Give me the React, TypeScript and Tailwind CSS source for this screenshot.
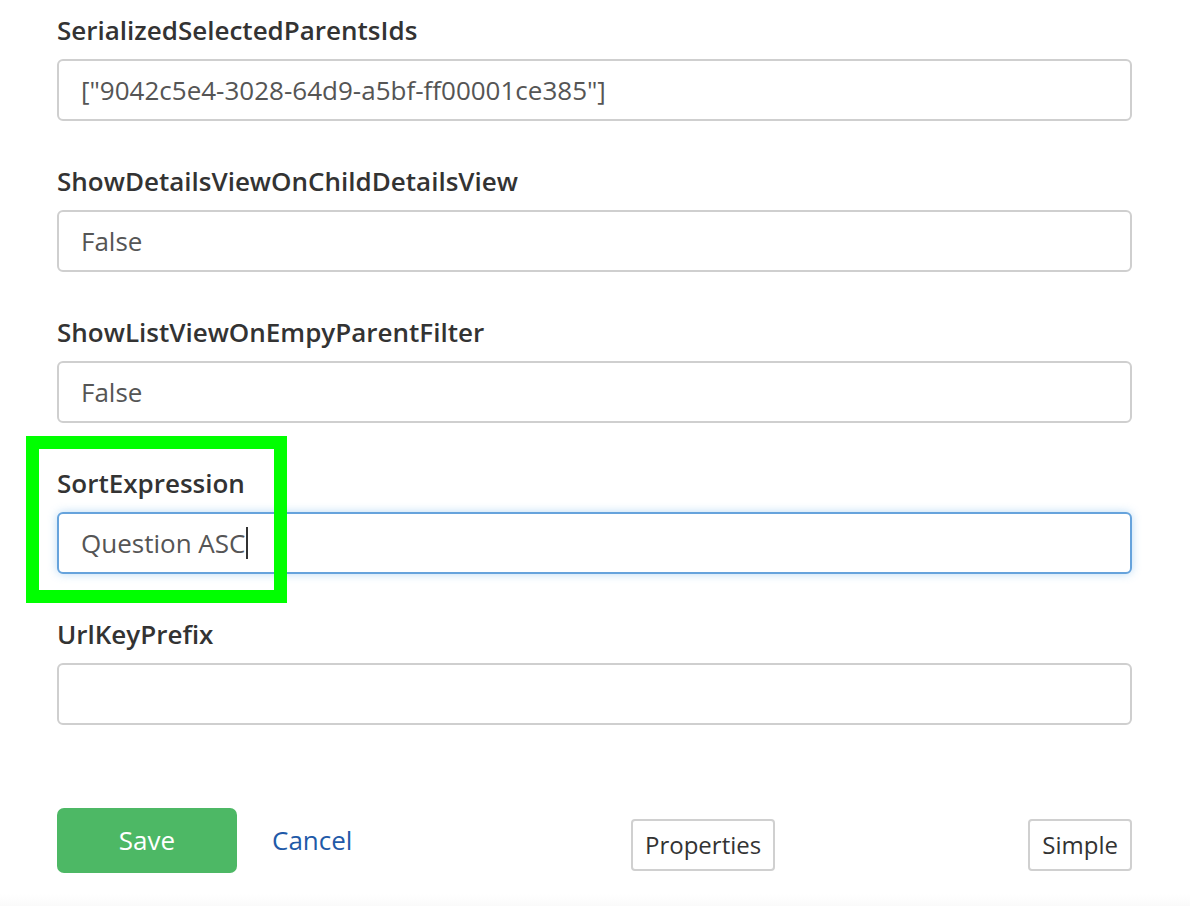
import React from "react";

const font = { fontFamily: '"Open Sans", "Noto Sans", sans-serif' };

function Field({ label, value, focused }: { label: string; value: string; focused?: boolean }) {
  return (
    <div className="mb-[44px]">
      <div className="h-[32px] leading-[32px] text-[26px] font-semibold text-[#333] mb-[13px]">{label}</div>
      <div
        className={
          focused
            ? "h-[62px] rounded-[6px] border-2 border-[#66a3dc] bg-white flex items-center pl-[22px] text-[26px] text-[#555] shadow-[0_0_10px_rgba(102,175,233,0.45)]"
            : "h-[62px] rounded-[6px] border-2 border-[#cfcfcf] bg-white flex items-center pl-[22px] text-[26px] text-[#555]"
        }
      >
        {value}
        {focused && <span className="inline-block w-[2px] h-[32px] bg-[#333] ml-[1px]" />}
      </div>
    </div>
  );
}

export default function App() {
  return (
    <div className="w-[1190px] h-[906px] bg-white relative overflow-hidden" style={font}>
      <div className="pt-[14px] pl-[57px] pr-[58px]">
        <Field label="SerializedSelectedParentsIds" value={'["9042c5e4-3028-64d9-a5bf-ff00001ce385"]'} />
        <Field label="ShowDetailsViewOnChildDetailsView" value="False" />
        <Field label="ShowListViewOnEmpyParentFilter" value="False" />
        <Field label="SortExpression" value="Question ASC" focused />
        <Field label="UrlKeyPrefix" value="" />
        <div className="flex items-start mt-[83px]">
          <div className="w-[574px] flex items-center">
            <button className="w-[180px] h-[65px] rounded-[7px] bg-[#4db865] text-white text-[26px]">Save</button>
            <span className="ml-[35px] text-[26px] text-[#1f5aa8]">Cancel</span>
          </div>
          <button className="mt-[11px] h-[52px] px-[12px] rounded-[4px] border-2 border-[#d0d0d0] bg-white text-[24px] text-[#333]">
            Properties
          </button>
          <button className="ml-auto mt-[11px] h-[52px] px-[12px] rounded-[4px] border-2 border-[#d0d0d0] bg-white text-[24px] text-[#333]">
            Simple
          </button>
        </div>
      </div>
      <div className="absolute left-[26px] top-[436px] w-[261px] h-[167px] border-[13px] border-[#00ff00] pointer-events-none" />
      <div className="absolute left-0 right-0 bottom-0 h-[12px] bg-gradient-to-b from-white to-[#fafafa]" />
    </div>
  );
}
